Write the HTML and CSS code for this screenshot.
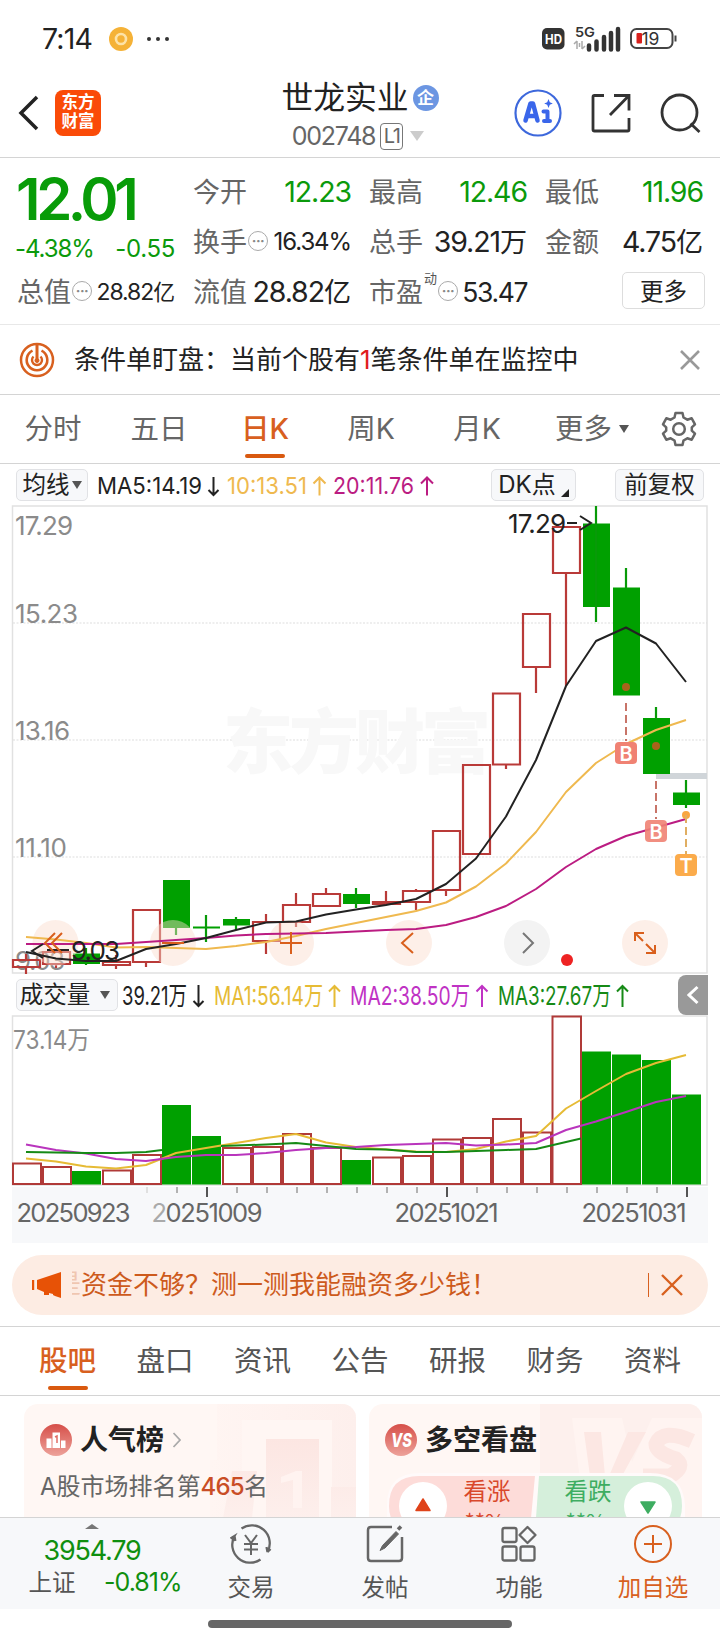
FILE: index.html
```
<!DOCTYPE html>
<html lang="zh-CN">
<head>
    <meta charset="UTF-8">
    <meta name="viewport" content="width=device-width, initial-scale=1.0">
    <title>世龙实业 002748</title>
    <link rel="stylesheet" href="styles.css">
</head>
<body>
    <div class="status">
        <div class="status-left">
            <span class="time">7:14</span>
            <svg width="56" height="26" viewBox="0 0 56 26">
                <circle cx="12" cy="13" r="12" fill="#f5b237"/>
                <circle cx="12" cy="13" r="5" fill="#f5b237" stroke="#fde3a8" stroke-width="2.6"/>
                <g fill="#333"><circle cx="40" cy="13" r="2"/><circle cx="49" cy="13" r="2"/><circle cx="58" cy="13" r="2"/></g>
            </svg>
        </div>
        <svg width="136" height="28" viewBox="542 25 136 28">
            <rect x="542" y="28" width="22.500" height="21.500" rx="5" fill="#333"/>
            <text class="ui bold" x="545" y="43.500" font-size="13" fill="#fff" textLength="17" lengthAdjust="spacingAndGlyphs">HD</text>
            <text class="ui semi" x="575" y="37" font-size="13.500" fill="#333" textLength="20" lengthAdjust="spacingAndGlyphs">5G</text>
            <path d="M577 41v8M577 41l-3 3M582 41v8M582 49l3-3M579.500 43v4" fill="none" stroke="#aaa" stroke-width="1.500"/>
            <path d="M589 45.500v4M596.500 41.500v8M604 37v12.500M611 33v16.500M618 29v20.500" fill="none" stroke="#333" stroke-width="4.500" stroke-linecap="round"/>
            <rect x="631" y="29" width="41.500" height="19" rx="5.500" fill="none" stroke="#444" stroke-width="2"/>
            <path d="M675.500 35.500v6" stroke="#444" stroke-width="2"/>
            <rect x="636.500" y="33" width="5.500" height="10.500" rx="1" fill="#d8201c"/>
            <text class="ui" x="641.500" y="44.500" font-size="17" fill="#333" textLength="18" lengthAdjust="spacingAndGlyphs">19</text>
        </svg>
    </div>

    <header class="header">
        <div class="header-left">
            <svg width="22" height="38" viewBox="0 0 22 38"><path d="M20 3L4 19l16 16" fill="none" stroke="#222" stroke-width="3.500"/></svg>
            <div class="logo"><span>东方</span><span>财富</span></div>
        </div>
        <div class="header-title">
            <div class="name">世龙实业<span class="corp">企</span></div>
            <div class="code"><span class="num">002748</span><span class="level">L1</span><i class="caret"></i></div>
        </div>
        <div class="header-right">
            <svg width="48" height="48" viewBox="515 89 48 48">
                <circle cx="539" cy="113" r="22.500" fill="none" stroke="#3d68dc" stroke-width="2.200"/>
                <path d="M526.500 120.500L531.500 103.500h2.500l4.500 17M528.500 116h8" fill="none" stroke="#3a66ea" stroke-width="4.500" stroke-linejoin="round" stroke-linecap="round"/>
                <path d="M544.500 111.500h4v9.500M545 121h6" fill="none" stroke="#3a66ea" stroke-width="4" stroke-linejoin="round" stroke-linecap="round"/>
                <path d="M549.500 99l1.300 3.200 3 1.300-3 1.300-1.300 3.200-1.300-3.200-3-1.300 3-1.300z" fill="#3a66ea"/>
            </svg>
            <svg width="42" height="42" viewBox="590 92 42 42">
                <path d="M604 95.500h-9.500q-1.500 0-1.500 1.500v32.500q0 1.500 1.500 1.500h33q1.500 0 1.500-1.500V118M614 95.500h15v15M629 95.500L610 115" fill="none" stroke="#333" stroke-width="2.800"/>
            </svg>
            <svg width="42" height="42" viewBox="660 91 42 42">
                <circle cx="679.500" cy="111.500" r="17.500" fill="none" stroke="#333" stroke-width="2.800"/>
                <path d="M690.500 122.500l9 8.500" stroke="#333" stroke-width="2.800"/>
            </svg>
        </div>
    </header>

    <section class="quote">
        <div class="price">12.01</div>
        <div class="cell"><label>今开</label><b class="green">12.23</b></div>
        <div class="cell"><label>最高</label><b class="green">12.46</b></div>
        <div class="cell"><label>最低</label><b class="green">11.96</b></div>
        <div class="cell change"><b class="green small">-4.38%</b><b class="green small diff">-0.55</b></div>
        <div class="cell"><label>换手</label><i class="tip">···</i><b class="small">16.34%</b></div>
        <div class="cell"><label>总手</label><b>39.21<em>万</em></b></div>
        <div class="cell"><label>金额</label><b>4.75<em>亿</em></b></div>
        <div class="cell"><label>总值</label><i class="tip">···</i><b class="small tight">28.82<em>亿</em></b></div>
        <div class="cell"><label>流值</label><b>28.82<em>亿</em></b></div>
        <div class="cell pe"><label>市盈</label><sup>动</sup><i class="tip">···</i><b class="pe-num">53.47</b></div>
        <div class="cell"><button class="more">更多</button></div>
    </section>

    <section class="notice">
        <svg width="36" height="36" viewBox="0 0 36 36" fill="none" stroke="#d8601f">
            <circle cx="18" cy="18" r="16" stroke-width="2.500"/>
            <path d="M13.500 8.700a10.300 10.300 0 1 0 9 0" stroke-width="2.600"/>
            <path d="M14.500 14.500a5 5 0 1 0 7 0" stroke-width="2.400"/>
            <path d="M18 2v16" stroke-width="3"/>
            <circle cx="18" cy="18.500" r="2" fill="#d8601f"/>
        </svg>
        <p>条件单盯盘：当前个股有<span class="red">1</span>笔条件单在监控中</p>
        <svg class="close" width="20" height="20" viewBox="0 0 20 20"><path d="M1 1l18 18M19 1L1 19" stroke="#999" stroke-width="2.600"/></svg>
    </section>

    <nav class="periods">
        <span>分时</span>
        <span>五日</span>
        <span class="active">日K</span>
        <span>周K</span>
        <span>月K</span>
        <span>更多<i class="dot-caret"></i></span>
        <svg width="36" height="36" viewBox="0 0 36 36" fill="none" stroke="#666" stroke-width="2.500" stroke-linejoin="round">
            <path d="M14.500 2h7l1 4.500 3.800 2.200 4.400-1.400 3.300 6-3.200 3v3.400l3.200 3-3.300 6-4.400-1.400-3.800 2.200-1 4.500h-7l-1-4.500-3.800-2.200-4.400 1.400-3.300-6 3.200-3v-3.400l-3.200-3 3.300-6 4.400 1.400 3.800-2.200z"/>
            <circle cx="18" cy="18" r="5.800"/>
        </svg>
    </nav>

    <section class="ma-row">
        <span class="pill ma-pill">均线<i class="dot-caret"></i></span>
        <svg width="345" height="41" viewBox="95 464 345 41" font-size="23.500">
            <text class="ui" x="97" y="494" fill="#222" textLength="105" lengthAdjust="spacingAndGlyphs">MA5:14.19</text>
            <text class="ui" x="227" y="494" fill="#efb94f" textLength="80" lengthAdjust="spacingAndGlyphs">10:13.51</text>
            <text class="ui" x="333" y="494" fill="#bb1c82" textLength="81" lengthAdjust="spacingAndGlyphs">20:11.76</text>
            <g fill="none" stroke-width="2">
                <path d="M213.500 477v18M208.500 490l5 5 5-5" stroke="#222"/>
                <path d="M319.500 495.500v-18M313.500 483.500l6-6 6 6" stroke="#efb94f"/>
                <path d="M427 495.500v-18M421 483.500l6-6 6 6" stroke="#bb1c82"/>
            </g>
        </svg>
        <span class="pill dk-pill">DK点<i class="corner"></i></span>
        <span class="pill fq-pill">前复权</span>
    </section>

    <!-- daily candles -->
    <svg class="chart" width="720" height="469" viewBox="0 505 720 469">
        <g fill="none" stroke="#e1e1e1" stroke-width="1.500">
            <rect x="12.500" y="506" width="694.500" height="467"/>
            <path d="M13 623h694M13 740h694M13 857h694" stroke="#ddd" stroke-width="1" stroke-dasharray="2 1.500"/>
        </g>
        <text class="cjk mark" x="223" y="768" font-size="70" textLength="268" fill="#f8f8f8">东方财富</text>
        <g fill="#8b8b8b" class="ui" font-size="26">
            <text x="15" y="535" textLength="58">17.29</text>
            <text x="15" y="623" textLength="63">15.23</text>
            <text x="15" y="740" textLength="55">13.16</text>
            <text x="15" y="857" textLength="52">11.10</text>
            <text x="15" y="970" textLength="50">9.03</text>
        </g>
        <g fill="none" stroke="#b93a38" stroke-width="2.200">
            <path d="M13 960h27v7h-27zM43 952h27v12h-27zM103 962h27v3h-27zM133 910h27v52h-27zM253 922h27v19h-27zM283 905h27v17h-27zM313 894h27v12h-27zM373 902h27v2h-27zM403 891h27v11h-27zM433 831h27v59h-27zM463 765h27v89h-27zM493 693.500h27v71h-27zM523 614h27v53h-27zM553 527h27v46h-27z"/>
            <path d="M26 954v6M26 967v7M56 964v4M116 955v7M116 965v4M146 962v5M266 914v8M266 941v13M296 893v12M296 922v5M326 888v6M386 891v11M416 889v2M416 902v8M446 890v6M506 764v5M536 667v26M566 573v113"/>
        </g>
        <path d="M656 773h51v6h-51z" fill="#d0d5d9"/>
        <g fill="#00a000" stroke="none">
            <path d="M73 953.500h27v10.500h-27zM163 880h27v48h-27zM193 926.500h27v2h-27zM223 919h27v6.500h-27zM343 894h27v10h-27zM583 523.500h27v83.500h-27zM613 587.500h27v108h-27zM643 718h27v56h-27zM673 792.500h27v12.500h-27z"/>
        </g>
        <path d="M86 948v17M176 928v7M206 915v27M236 917v13M356 888v20M596 506v116M626 568v20M656 707v12M686 780v28" stroke="#089a08" stroke-width="2.200" fill="none"/>
        <g fill="#fbdccc" fill-opacity=".45">
            <circle cx="55.500" cy="943" r="23"/><circle cx="173" cy="943" r="23"/><circle cx="291" cy="943" r="23"/>
            <circle cx="409" cy="943" r="23"/><circle cx="645" cy="943" r="23"/>
        </g>
        <circle cx="527" cy="943" r="23" fill="#f3f3f3"/>
        <g fill="none" stroke-width="2" stroke-linejoin="round">
            <polyline stroke="#efb94f" points="26,937 56,939.500 86,943 116,947.500 146,947 176,948 206,949 236,946 266,942 296,936 326,929 356,923 386,917 416,911 446,902.500 476,886.500 506,863.500 536,832 566,792 596,763 626,744 656,730 686,720"/>
            <polyline stroke="#bb1c82" points="26,944 116,944 146,942 176,940 206,938 236,935.500 266,934 296,933.500 326,933 356,931.500 386,930 416,929 446,925 476,917 506,906 536,889 566,867 596,849 626,836 656,827.500 686,819"/>
            <polyline stroke="#222" points="26,952 56,958.500 86,961 116,961 146,949 176,944 206,938 236,930 266,922.500 296,921.500 326,914.500 356,909.500 386,905 416,899 446,884 476,858.500 506,816.500 536,760 566,686 596,641 626,627.500 656,643.500 686,682"/>
        </g>
        <!-- buy / T marks -->
        <circle cx="626" cy="687" r="4" fill="#a9631b"/>
        <circle cx="656" cy="746" r="4" fill="#a9631b"/>
        <circle cx="686" cy="815" r="4" fill="#f9a640"/>
        <path d="M626 703v38M656 781v38" stroke="#c87468" stroke-width="2" stroke-dasharray="8 4"/>
        <path d="M686 815v39" stroke="#e0ae62" stroke-width="2" stroke-dasharray="8 4"/>
        <g class="ui semi" font-size="20" text-anchor="middle">
            <rect x="615" y="742" width="22" height="22" rx="4" fill="#f08273"/><text x="626" y="760.500" fill="#fff">B</text>
            <rect x="645" y="820" width="22" height="22" rx="4" fill="#f08273" fill-opacity=".9"/><text x="656" y="838.500" fill="#fff">B</text>
            <rect x="675" y="854" width="22" height="22" rx="4" fill="#fbab4b"/><text x="686" y="872.500" fill="#fff">T</text>
        </g>
        <circle cx="567" cy="960" r="6" fill="#ee2323"/>
        <g fill="none" stroke="#222" stroke-width="2">
            <path d="M567 523h10M580 516l11 7-11 7"/>
            <path d="M43 944l-11 7 11 7M47 950h22"/>
        </g>
        <g class="ui" fill="#222" font-size="26">
            <text x="508" y="533" textLength="58">17.29</text>
            <text x="71" y="960" textLength="49">9.03</text>
        </g>
        <g fill="none" stroke="#d95f1c" stroke-width="2">
            <path d="M55 933l-10 10 10 10M62 933l-10 10 10 10"/>
            <path d="M162 943h22M280 943h22M291 932v22"/>
            <path d="M413 933l-11 10 11 10"/>
            <path d="M635 941v-8h9M635 933l8 8M655 945v8h-9M655 953l-9-9"/>
            <path d="M523 933l10 10-10 10" stroke="#777"/>
        </g>
    </svg>

    <section class="vol-row">
        <span class="pill vol-pill">成交量<i class="dot-caret"></i></span>
        <svg width="515" height="41" viewBox="120 974 515 41" font-size="26">
            <text class="ui" x="122" y="1005" fill="#222" textLength="65" lengthAdjust="spacingAndGlyphs">39.21万</text>
            <text class="ui" x="214" y="1005" fill="#e6bb35" textLength="109" lengthAdjust="spacingAndGlyphs">MA1:56.14万</text>
            <text class="ui" x="350" y="1005" fill="#bf32c4" textLength="120" lengthAdjust="spacingAndGlyphs">MA2:38.50万</text>
            <text class="ui" x="498" y="1005" fill="#168a16" textLength="113" lengthAdjust="spacingAndGlyphs">MA3:27.67万</text>
            <g fill="none" stroke-width="2">
                <path d="M198.500 985v21M193.500 1001l5 5 5-5" stroke="#222"/>
                <path d="M334.500 1007v-21M329 991.500l5.500-5.500 5.500 5.500" stroke="#e6bb35"/>
                <path d="M482 1007v-21M476.500 991.500l5.500-5.500 5.500 5.500" stroke="#bf32c4"/>
                <path d="M622.500 1007v-21M617 991.500l5.500-5.500 5.500 5.500" stroke="#168a16"/>
            </g>
        </svg>
        <span class="collapse"><svg width="12" height="20" viewBox="0 0 12 20"><path d="M10.500 2L2 10l8.500 8" fill="none" stroke="#fff" stroke-width="3"/></svg></span>
    </section>

    <!-- volume bars and date axis -->
    <svg class="chart" width="720" height="230" viewBox="0 1015 720 230">
        <rect x="12.500" y="1016" width="694.500" height="169" fill="none" stroke="#e1e1e1" stroke-width="1.500"/>
        <text class="ui" x="13" y="1049" font-size="25" fill="#8b8b8b" textLength="77" lengthAdjust="spacingAndGlyphs">73.14万</text>
        <path fill="none" stroke="#b03a38" stroke-width="2" d="M13 1163.500h28v20.500h-28zM43 1167h28v17h-28zM103 1170.500h28v13.500h-28zM133 1155h28v29h-28zM223 1148h28v36h-28zM253 1147h28v37h-28zM283 1134h28v50h-28zM313 1148h28v36h-28zM373 1157.500h28v26.500h-28zM403 1156h28v28h-28zM433 1139.500h28v44.500h-28zM463 1138h28v46h-28zM493 1119h28v65h-28zM523 1132.500h28v51.500h-28zM552.500 1016.500h28.500v167.500h-28.500z"/>
        <path fill="#00a000" d="M72 1171h29v13.500h-29zM162 1105h29v79.500h-29zM192 1136h29v48.500h-29zM342 1160h29v24.500h-29zM582 1051.500h29v133h-29zM612 1054.500h29v130h-29zM642 1060h29v124.500h-29zM672 1094.500h29v90h-29z"/>
        <g fill="none" stroke-width="2" stroke-linejoin="round">
            <polyline stroke="#e6bb35" points="26,1158.500 56,1161.500 86,1166.500 116,1168.500 146,1165 176,1153 206,1148 236,1143 266,1138 296,1134 326,1142.500 356,1147 386,1149.500 416,1151.500 446,1152 476,1149 506,1141.500 536,1136 566,1108.500 596,1091 626,1074 656,1063 686,1055"/>
            <polyline stroke="#b935bd" points="26,1144.500 56,1150 86,1153.500 116,1159 146,1161 176,1157 206,1155 236,1155 266,1153 296,1150 326,1148 356,1147 386,1145 416,1144 446,1143 476,1145.500 506,1144.500 536,1143 566,1130 596,1121.500 626,1112 656,1102 686,1096"/>
            <polyline stroke="#168a16" points="26,1152 56,1152.500 86,1153 116,1153 146,1152 162,1150"/>
            <polyline stroke="#168a16" points="221,1146 236,1145.500 266,1144.500 296,1143 326,1146 356,1149 386,1149.500 416,1152 446,1152 476,1151 506,1150 536,1149 566,1142 581,1138.500"/>
        </g>
        <path d="M12 1187h696v56h-696z" fill="#f7f8fa"/>
        <path d="M177 1187v6M237 1187v6M267 1187v6M297 1187v6M327 1187v6M357 1187v6M387 1187v6M417 1187v6M477 1187v6M507 1187v6M537 1187v6M567 1187v6M597 1187v6M627 1187v6M657 1187v6" stroke="#aaa" stroke-width="1.800"/>
        <path d="M147 1187v6" stroke="#ddd" stroke-width="1.800"/>
        <path d="M207 1187v10M447 1187v10M687 1187v10" stroke="#555" stroke-width="2"/>
        <g class="ui" fill="#666" font-size="25.500">
            <text x="16.500" y="1222" textLength="114">20250923</text>
            <text x="151.500" y="1222" textLength="111"><tspan fill="#aaa">2</tspan>0251009</text>
            <text x="394.500" y="1222" textLength="104">20251021</text>
            <text x="581.500" y="1222" textLength="105">20251031</text>
        </g>
    </svg>

    <section class="banner">
        <svg width="32" height="28" viewBox="0 0 32 28" fill="#e75206">
            <path d="M1 9h2.200v10H1zM6 9L30 1v26l-6-2-2-1v-1l-4-1v2h-5v-3l-7-3z"/>
        </svg>
        <span class="cut">是</span>
        <p>资金不够？测一测我能融资多少钱！</p>
        <i class="bar"></i>
        <svg width="24" height="24" viewBox="0 0 24 24"><path d="M2 2l20 20M22 2L2 22" stroke="#d8601f" stroke-width="2.400"/></svg>
    </section>

    <nav class="sections">
        <span class="active">股吧</span>
        <span>盘口</span>
        <span>资讯</span>
        <span>公告</span>
        <span>研报</span>
        <span>财务</span>
        <span>资料</span>
    </nav>

    <main class="cards">
        <article class="card">
            <svg class="decor" width="332" height="114" viewBox="24 1404 332 114">
                <path d="M217 1404h139v114H210v-58h7z" fill="url(#blush)"/>
                <path d="M242 1420h90v98h-90z" fill="#fff6f3"/>
                <path d="M266 1439h53v79h-53zM232 1471h25l-5 47h-29zM331 1487h25v31h-25z" fill="url(#podium)"/>
                <path d="M281 1477l15-6h6v37h-9v-28l-12 3z" fill="#fff3f0"/>
                <defs>
                    <linearGradient id="blush" x1="0" y1="0" x2="1" y2="0"><stop offset="0" stop-color="#fff5f2"/><stop offset="1" stop-color="#fdefec"/></linearGradient>
                    <linearGradient id="podium" x1="0" y1="0" x2="0" y2="1"><stop offset="0" stop-color="#fce6e2"/><stop offset="1" stop-color="#fdefec"/></linearGradient>
                </defs>
            </svg>
            <h3>
                <svg width="32" height="32" viewBox="0 0 32 32">
                    <circle cx="16" cy="16" r="16" fill="url(#redFade)"/>
                    <path d="M6.500 14.500h5V24h-5zM12.500 8.500h7.500V24h-7.500zM21 16.500h4.500V24H21z" fill="#fff"/>
                    <path d="M15 13l2-1v7" fill="none" stroke="#df6d65" stroke-width="1.500"/>
                    <defs><linearGradient id="redFade" x1="0" y1="0" x2="0" y2="1"><stop offset="0" stop-color="#d64f49"/><stop offset="1" stop-color="#eda29a"/></linearGradient></defs>
                </svg>
                人气榜
                <svg width="10" height="16" viewBox="0 0 10 16"><path d="M1.500 1l6.500 7-6.500 7" fill="none" stroke="#aaa" stroke-width="1.800"/></svg>
            </h3>
            <p class="rank">A股市场排名第<b>465</b>名</p>
        </article>
        <article class="card">
            <svg class="decor" width="333" height="114" viewBox="369 1404 333 114">
                <path d="M540 1404h162v114H540z" fill="#fdf0ed"/>
                <path d="M572 1418h50l10 44 20-44h50v100H585z" fill="#fff4f1"/>
                <path d="M584 1432h17l4 44h-15zM628 1432h18l-24 44h-13z" fill="#fce7e3"/>
                <path d="M692 1441q-29-13-36 3 0 9 20 15 10 8-6 17h-27" fill="none" stroke="#fce7e3" stroke-width="15"/>
            </svg>
            <h3>
                <svg width="32" height="32" viewBox="0 0 32 32">
                    <circle cx="16" cy="16" r="16" fill="url(#redFade)"/>
                    <text class="ui vs" x="6" y="23" font-size="19" fill="#fff" textLength="21" lengthAdjust="spacingAndGlyphs">VS</text>
                </svg>
                多空看盘
            </h3>
            <svg class="vote" width="300" height="46" viewBox="386 1472 300 46">
                <path d="M420 1473h230q33 0 35 32v13H387v-13q0-32 33-32z" fill="#fffafa"/>
                <path d="M419 1476h116l-4 42H391q-2-6-2-12 0-30 30-30z" fill="#fddcd9"/>
                <path d="M539 1476h114q29 0 29 30 0 6-2 12H536z" fill="#d5efdb"/>
                <circle cx="423" cy="1506" r="24" fill="#fff"/><circle cx="648" cy="1506" r="24" fill="#fff"/>
                <path d="M423 1499l7 11.500h-14z" fill="#df431a" stroke="#df431a" stroke-width="1.500" stroke-linejoin="round"/>
                <path d="M648 1513l-7-11h14z" fill="#3ead61" stroke="#3ead61" stroke-width="1.500" stroke-linejoin="round"/>
                <g class="cjk" font-size="23.500">
                    <text x="463.500" y="1500" fill="#d9482b">看涨</text><text x="464.500" y="1530" font-size="22" fill="#d9482b">**%</text>
                    <text x="564.500" y="1500" fill="#3ead61">看跌</text><text x="565.500" y="1530" font-size="22" fill="#3ead61">**%</text>
                </g>
            </svg>
        </article>
    </main>

    <footer class="tabbar">
        <div class="index">
            <i class="up"></i>
            <b>3954.79</b>
            <div><span>上证</span><b class="pct">-0.81%</b></div>
        </div>
        <div class="tab">
            <svg width="44" height="40" viewBox="0 0 44 40" fill="none" stroke="#666" stroke-width="2.300">
                <path d="M12.500 4.500A18 18 0 0 1 38.500 28l3-3M38.500 28l-1-5M31.500 35.500A18 18 0 0 1 5.500 12l-4 2.500M5.500 12l.8 5"/>
                <path d="M16 11l6 8 6-8M22 19v12M15 20h14M15 25.500h14" stroke-width="2"/>
            </svg>
            <span>交易</span>
        </div>
        <div class="tab">
            <svg width="40" height="40" viewBox="0 0 40 40" fill="none" stroke="#666" stroke-width="2.500">
                <path d="M27 3H6q-3 0-3 3v28q0 3 3 3h28q3 0 3-3V13"/>
                <path d="M15 26.500l2.500-5L31 7.500l2.500 2.500L20 24z" fill="#666" stroke-width="1"/><path d="M33 5.500l3-3" stroke-width="3.500"/>
            </svg>
            <span>发帖</span>
        </div>
        <div class="tab">
            <svg width="40" height="40" viewBox="0 0 40 40" fill="none" stroke="#666" stroke-width="2.300" stroke-linejoin="round">
                <rect x="3.500" y="4" width="14" height="14" rx="2"/><rect x="3.500" y="22.500" width="14" height="14" rx="2"/><rect x="21.500" y="22.500" width="14" height="14" rx="2"/>
                <path d="M28.500 3l8 8-8 8-8-8z"/>
            </svg>
            <span>功能</span>
        </div>
        <div class="tab add">
            <svg width="40" height="40" viewBox="0 0 40 40" fill="none" stroke="#d8601f" stroke-width="2">
                <circle cx="20" cy="20" r="18"/><path d="M11 20h18M20 11v18"/>
            </svg>
            <span>加自选</span>
        </div>
    </footer>
    <div class="home"><i></i></div>
</body>
</html>
```
FILE: styles.css
```
* {
    box-sizing: border-box;
}
body {
    margin: 0;
    width: 720px;
    height: 1640px;
    overflow: hidden;
    background-color: #fff;
    color: #222;
    font-family: Inter, "Noto Sans CJK SC", sans-serif;
    font-size: 27px;
    line-height: 1;
}
svg {
    display: block;
    flex: none;
}
p, h3 {
    margin: 0;
}
i, em {
    font-style: normal;
}
b {
    font-weight: 400;
}
.ui {
    font-family: Inter, "Noto Sans CJK SC", sans-serif;
}
.cjk {
    font-family: "Noto Sans CJK SC", sans-serif;
}
.semi {
    font-weight: 600;
}
.bold {
    font-weight: 700;
}
.mark {
    font-weight: 900;
}
.vs {
    font-weight: 800;
    font-style: italic;
}
.green {
    color: #0b9a0b;
}
.red {
    color: #e01c1c;
}

/* status bar */
.status {
    height: 75px;
    padding: 3px 42px 0 42px;
    display: flex;
    justify-content: space-between;
    align-items: center;
}
.status-left {
    display: flex;
    align-items: center;
    gap: 14px;
}
.status-left svg {
    overflow: visible;
}
.time {
    width: 53px;
    font-size: 28.5px;
    letter-spacing: -.8px;
    white-space: nowrap;
}

/* title bar */
.header {
    height: 83px;
    border-bottom: 1px solid #d4d4d4;
    display: grid;
    grid-template-columns: 200px 1fr 200px;
    align-items: center;
    padding: 0 17px;
}
.header-left {
    display: flex;
    align-items: center;
    gap: 16px;
    padding-bottom: 6px;
}
.logo {
    width: 46px;
    height: 46px;
    border-radius: 8px;
    background-color: #fa4b08;
    color: #fff;
    font-size: 16.5px;
    font-weight: 700;
    line-height: 19px;
    padding-top: 3px;
    text-align: center;
}
.logo span {
    display: block;
}
.header-title {
    display: flex;
    flex-direction: column;
    align-items: center;
    gap: 9px;
}
.name {
    display: flex;
    align-items: center;
    gap: 4px;
    font-size: 31.8px;
    white-space: nowrap;
}
.corp {
    width: 26px;
    height: 26px;
    border-radius: 50%;
    background-color: #6c96e2;
    color: #fff;
    font-size: 17px;
    font-weight: 700;
    line-height: 26px;
    text-align: center;
}
.code {
    display: flex;
    align-items: center;
    color: #666;
    font-size: 25px;
    letter-spacing: -1.3px;
    height: 27px;
    margin-left: -4px;
}
.level {
    width: 23px;
    height: 27px;
    margin: 0 7px 0 5px;
    border: 1.5px solid #777;
    border-radius: 4px;
    font-size: 20px;
    line-height: 25px;
    text-align: center;
}
.caret {
    border: 7px solid transparent;
    border-top: 10px solid #ccc;
    border-bottom: 0;
}
.header-right {
    display: flex;
    align-items: center;
    justify-content: flex-end;
    gap: 28px;
    padding: 0 1px 6px 0;
}

/* quote numbers */
.quote {
    height: 167px;
    padding: 9px 16px 8px 17px;
    border-bottom: 1px solid #e8e8e8;
    display: grid;
    grid-template-columns: repeat(4, 158px);
    grid-template-rows: repeat(3, 50px);
    column-gap: 18px;
    align-items: center;
}
.price {
    color: #089c08;
    font-size: 58px;
    font-weight: 600;
    letter-spacing: -4.4px;
    padding-top: 14px;
    margin-left: -1px;
}
.cell {
    display: flex;
    align-items: center;
    justify-content: space-between;
    white-space: nowrap;
}
.cell label {
    color: #666;
}
.cell b {
    font-size: 28.5px;
    letter-spacing: -1.1px;
}
.cell b.small {
    font-size: 24px;
    letter-spacing: -1.1px;
}
.cell b.tight {
    font-size: 23px;
}
.cell em {
    font-size: .95em;
    letter-spacing: 0;
}
.change {
    padding-top: 14px;
    margin-left: -2px;
}
.cell b.diff {
    letter-spacing: -.3px;
}
.tip {
    width: 20px;
    height: 20px;
    margin: 0 auto 3px 1px;
    border: 1.5px solid #aaa;
    border-radius: 50%;
    color: #888;
    font-size: 14px;
    font-weight: 700;
    line-height: 17px;
    letter-spacing: -.5px;
    text-align: center;
}
.pe sup {
    align-self: flex-start;
    font-size: 13px;
    margin: -7px 0 0 1px;
    color: #555;
}
.pe label + sup + .tip {
    margin-left: 1px;
}
.cell b.pe-num {
    font-size: 26.5px;
    letter-spacing: -1.4px;
}
.more {
    width: 83px;
    height: 37px;
    margin: 0 -2px 4px auto;
    padding: 0;
    border: 1.5px solid #ddd;
    border-radius: 5px;
    background-color: #fff;
    color: #222;
    font: 23.5px/32px "Noto Sans CJK SC", sans-serif;
}

/* alert strip */
.notice {
    height: 70px;
    border-bottom: 1px solid #d4d4d4;
    padding: 0 20px 0 19px;
    display: flex;
    align-items: center;
}
.notice p {
    margin-left: 19px;
    font-size: 26px;
    white-space: nowrap;
}
.notice .close {
    margin-left: auto;
}

/* period tabs */
.periods {
    height: 69px;
    border-bottom: 1px solid #d4d4d4;
    display: grid;
    grid-template-columns: repeat(6, 106px) 1fr;
    color: #666;
    font-size: 28.5px;
}
.periods span {
    height: 68px;
    display: flex;
    align-items: center;
    justify-content: center;
}
.periods span:nth-child(6) {
    padding-left: 18px;
}
.periods svg {
    margin: 16px 0 0 25px;
}
.active {
    color: #d8601f;
    font-weight: 500;
    position: relative;
}
.active::after {
    content: "";
    position: absolute;
    left: 50%;
    bottom: 5px;
    width: 40px;
    height: 4px;
    margin-left: -20px;
    border-radius: 2px;
    background-color: #d9590f;
}
.dot-caret {
    margin-left: 7px;
    border: 5px solid transparent;
    border-top: 8px solid #555;
    border-bottom: 0;
}

/* indicator rows */
.ma-row, .vol-row {
    height: 41px;
    display: flex;
    align-items: center;
    padding: 0 16px;
}
.pill {
    height: 32px;
    border: 1.5px solid #e1e2e5;
    border-radius: 5px;
    background-color: #f7f8fa;
    display: flex;
    align-items: center;
    justify-content: center;
    flex: none;
    font-size: 23.5px;
}
.ma-pill {
    width: 72px;
    margin-right: 7px;
}
.ma-pill .dot-caret {
    margin-left: 2px;
}
.dk-pill {
    width: 85px;
    margin-left: 51px;
    font-size: 24px;
    gap: 5px;
}
.corner {
    align-self: flex-end;
    margin-bottom: 3px;
    border: 4px solid #222;
    border-top-color: transparent;
    border-left-color: transparent;
}
.fq-pill {
    width: 89px;
    margin-left: auto;
}
.vol-pill {
    width: 102px;
    margin-right: 2px;
    padding-right: 4px;
}
.vol-pill .dot-caret {
    margin-left: 10px;
}
.vol-row {
    padding-right: 12px;
}
.collapse {
    width: 30px;
    height: 40px;
    margin-left: auto;
    border-radius: 8px 0 0 8px;
    background-color: #999;
    display: flex;
    align-items: center;
    justify-content: center;
}

/* margin loan banner */
.banner {
    height: 60px;
    margin: 10px 12px 11px;
    padding: 0 24px 0 19px;
    border-radius: 30px;
    background-color: #fdece3;
    color: #cd5a1c;
    display: flex;
    align-items: center;
    font-size: 26px;
}
.banner p {
    white-space: nowrap;
}
.cut {
    width: 9px;
    margin-left: 9px;
    overflow: hidden;
    direction: rtl;
    opacity: .25;
    height: 28px;
}
.bar {
    width: 1.5px;
    height: 24px;
    margin: 0 11px 0 auto;
    background-color: #d8601f;
}

/* content tabs */
.sections {
    height: 70px;
    padding: 0 18.75px;
    border-top: 1px solid #d4d4d4;
    border-bottom: 1px solid #d4d4d4;
    display: grid;
    grid-template-columns: repeat(7, 97.5px);
    color: #555;
    font-size: 28.5px;
}
.sections span {
    display: flex;
    align-items: center;
    justify-content: center;
}

/* cards */
.cards {
    height: 121px;
    padding: 8px 18px 0 24px;
    display: grid;
    grid-template-columns: 332px 333px;
    gap: 13px;
    overflow: hidden;
}
.card {
    position: relative;
    border-radius: 14px 14px 0 0;
    background-color: #fff7f4;
    overflow: hidden;
    padding: 20px 16px 0;
}
.decor {
    position: absolute;
    left: 0;
    top: 0;
}
.card h3 {
    position: relative;
    display: flex;
    align-items: center;
    gap: 8px;
    height: 32px;
    font-size: 28px;
    font-weight: 700;
}
.rank {
    position: relative;
    margin-top: 19px;
    font-size: 24px;
    color: #666;
}
.rank b {
    color: #c94d25;
    font-weight: 500;
    letter-spacing: -.8px;
}
.vote {
    position: relative;
    margin: 16px 0 0 1px;
}

/* bottom bar */
.tabbar {
    height: 92px;
    border-top: 1px solid #d4d4d4;
    background-color: #f7f8fa;
    display: grid;
    grid-template-columns: 184px repeat(4, 134px);
    color: #555;
    font-size: 23.5px;
}
.index {
    display: flex;
    flex-direction: column;
    align-items: center;
    padding-top: 6px;
}
.index b {
    color: #0f8f0f;
    font-size: 27px;
    letter-spacing: -1.2px;
    margin-top: 8px;
}
.index div {
    width: 153px;
    display: flex;
    justify-content: space-between;
    align-items: center;
    margin: 6px 0 0 26px;
}
.index .pct {
    margin: 0;
    font-size: 25px;
    letter-spacing: -1px;
}
.up {
    border: 7px solid transparent;
    border-bottom: 5px solid #777;
    border-top: 0;
}
.tab {
    display: flex;
    flex-direction: column;
    align-items: center;
    padding-top: 6px;
    gap: 12px;
}
.add {
    color: #d8601f;
}
.home {
    height: 31px;
    display: flex;
    justify-content: center;
    padding-top: 11px;
}
.home i {
    width: 304px;
    height: 8px;
    border-radius: 4px;
    background-color: #666;
}
```
